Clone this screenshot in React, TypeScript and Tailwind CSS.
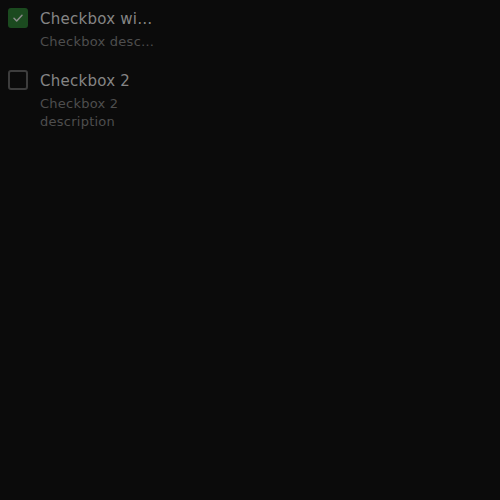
import { useState } from 'react';

const items = [
    { id: 'a', label: 'Checkbox with a long label', description: 'Checkbox description that is long', truncate: true },
    { id: 'b', label: 'Checkbox 2', description: 'Checkbox 2 description', truncate: false },
];

export default function App() {
    const [state, setState] = useState<Record<string, boolean>>({ a: true, b: false });

    return (
        <div className="min-h-[500px] w-[500px] bg-[#0b0b0b] p-2 flex flex-col gap-[19px]" style={{ fontFamily: '"DejaVu Sans", sans-serif' }}>
            {items.map((it) => {
                const on = state[it.id];
                return (
                    <label key={it.id} className="flex items-start gap-3 cursor-pointer w-[148px]">
                        <button
                            onClick={() => setState((s) => ({ ...s, [it.id]: !s[it.id] }))}
                            className={
                                on
                                    ? 'w-5 h-5 shrink-0 rounded-[3px] bg-[#1b4a1f] flex items-center justify-center'
                                    : 'w-5 h-5 shrink-0 rounded-[3px] border-2 border-[#3d3d3d] bg-transparent'
                            }
                        >
                            {on && (
                                <svg width="12" height="12" viewBox="0 0 12 12" fill="none">
                                    <path d="M2 6.3 L4.7 9 L10 3.2" stroke="#8a8a8a" strokeWidth="1.5" strokeLinecap="round" strokeLinejoin="round" />
                                </svg>
                            )}
                        </button>
                        <div className="min-w-0 flex-1 flex flex-col">
                            <span className={it.truncate ? 'text-[15px] leading-[22px] tracking-[0.25px] text-[#858585] truncate' : 'text-[15px] leading-[22px] tracking-[0.25px] text-[#858585]'}>
                                {it.label}
                            </span>
                            <span className={it.truncate ? 'mt-[3px] text-[13px] leading-[18px] tracking-[0.25px] text-[#4e4e4e] truncate' : 'mt-[3px] text-[13px] leading-[18px] tracking-[0.25px] text-[#4e4e4e]'}>
                                {it.description}
                            </span>
                        </div>
                    </label>
                );
            })}
        </div>
    );
}
